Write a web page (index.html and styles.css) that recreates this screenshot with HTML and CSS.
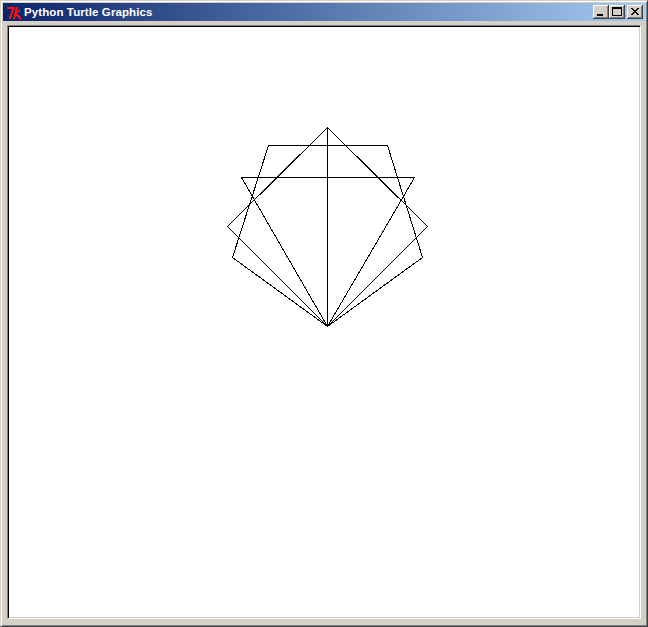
FILE: index.html
```html
<!DOCTYPE html>
<html>
<head>
<meta charset="utf-8">
<title>Python Turtle Graphics</title>
<link rel="stylesheet" href="styles.css">
</head>
<body>
<div class="window">
  <div class="titlebar">
    <svg class="tk-icon" width="16" height="14" viewBox="0 0 16 14" shape-rendering="crispEdges">
      <path d="M1 1.5 H8 L3.5 13" fill="none" stroke="#ff1010" stroke-width="2"/>
      <path d="M11 1 L8 13 M9.5 7.5 L14 4 M9.5 8 L15 13" fill="none" stroke="#ff1010" stroke-width="2"/>
    </svg>
    <span class="title">Python Turtle Graphics</span>
    <div class="controls">
      <div class="btn">
        <svg width="16" height="14" viewBox="0 0 16 14" shape-rendering="crispEdges"><rect x="4" y="9" width="6" height="2" fill="#000"/></svg>
      </div>
      <div class="btn">
        <svg width="16" height="14" viewBox="0 0 16 14" shape-rendering="crispEdges"><rect x="3.5" y="2.5" width="9" height="8" fill="none" stroke="#000"/><rect x="3" y="2" width="10" height="2" fill="#000"/></svg>
      </div>
      <div class="btn close">
        <svg width="16" height="14" viewBox="0 0 16 14" shape-rendering="crispEdges"><path d="M4 3 L11 10 M5 3 L12 10 M11 3 L4 10 M12 3 L5 10" stroke="#000" stroke-width="1" fill="none"/></svg>
      </div>
    </div>
  </div>
  <div class="client">
    <div class="canvas">
      <svg class="drawing" width="630" height="590" viewBox="9 27 630 590" shape-rendering="crispEdges">
        <g fill="none" stroke="#000" stroke-width="1">
          <polyline points="327.5,326.5 327.5,127.5"/>
          <polygon points="327.5,326.5 241.5,177.5 414.5,177.5"/>
          <polygon points="327.5,326.5 227.5,226.5 327.5,127.5 427.5,226.5"/>
          <polygon points="327.5,326.5 232.5,257.5 268.5,145.5 387.5,145.5 422.5,257.5"/>
        </g>
      </svg>
    </div>
  </div>
</div>
</body>
</html>
```

FILE: styles.css
```css
html, body {
  margin: 0;
  padding: 0;
  background: #d4d0c8;
}
.window {
  width: 648px;
  height: 627px;
  box-sizing: border-box;
  background: #d4d0c8;
  border-top: 1px solid #d4d0c8;
  border-left: 1px solid #d4d0c8;
  border-right: 1px solid #404040;
  border-bottom: 1px solid #404040;
  box-shadow: inset 1px 1px 0 #ffffff, inset -1px -1px 0 #808080;
  padding: 2px;
  display: flex;
  flex-direction: column;
}
.titlebar {
  height: 18px;
  flex: none;
  display: flex;
  align-items: center;
  background: linear-gradient(to right, #0a246a, #a6caf0);
  padding-left: 3px;
  padding-right: 2px;
}
.tk-icon {
  flex: none;
  margin-top: 2px;
}
.title {
  margin-left: 2px;
  color: #ffffff;
  font-family: "Liberation Sans", Arial, sans-serif;
  font-weight: bold;
  font-size: 11.5px;
  line-height: 18px;
  letter-spacing: 0.1px;
  white-space: nowrap;
}
.controls {
  margin-left: auto;
  display: flex;
  align-items: center;
}
.btn {
  width: 16px;
  height: 14px;
  box-sizing: border-box;
  background: #d4d0c8;
  box-shadow: inset -1px -1px 0 #404040, inset 1px 1px 0 #ffffff, inset -2px -2px 0 #808080, inset 2px 2px 0 #d4d0c8;
}
.btn svg {
  display: block;
}
.btn.close {
  margin-left: 2px;
}
.client {
  flex: 1;
  padding: 4px 4px 5px 4px;
  display: flex;
}
.canvas {
  flex: 1;
  background: #ffffff;
  border-top: 1px solid #808080;
  border-left: 1px solid #808080;
  border-right: 1px solid #ffffff;
  border-bottom: 1px solid #ffffff;
  box-shadow: inset 1px 1px 0 #000000, inset -1px -1px 0 #d4d0c8;
  overflow: hidden;
  position: relative;
}
.drawing {
  display: block;
  position: absolute;
  left: 1px;
  top: 1px;
}
```
